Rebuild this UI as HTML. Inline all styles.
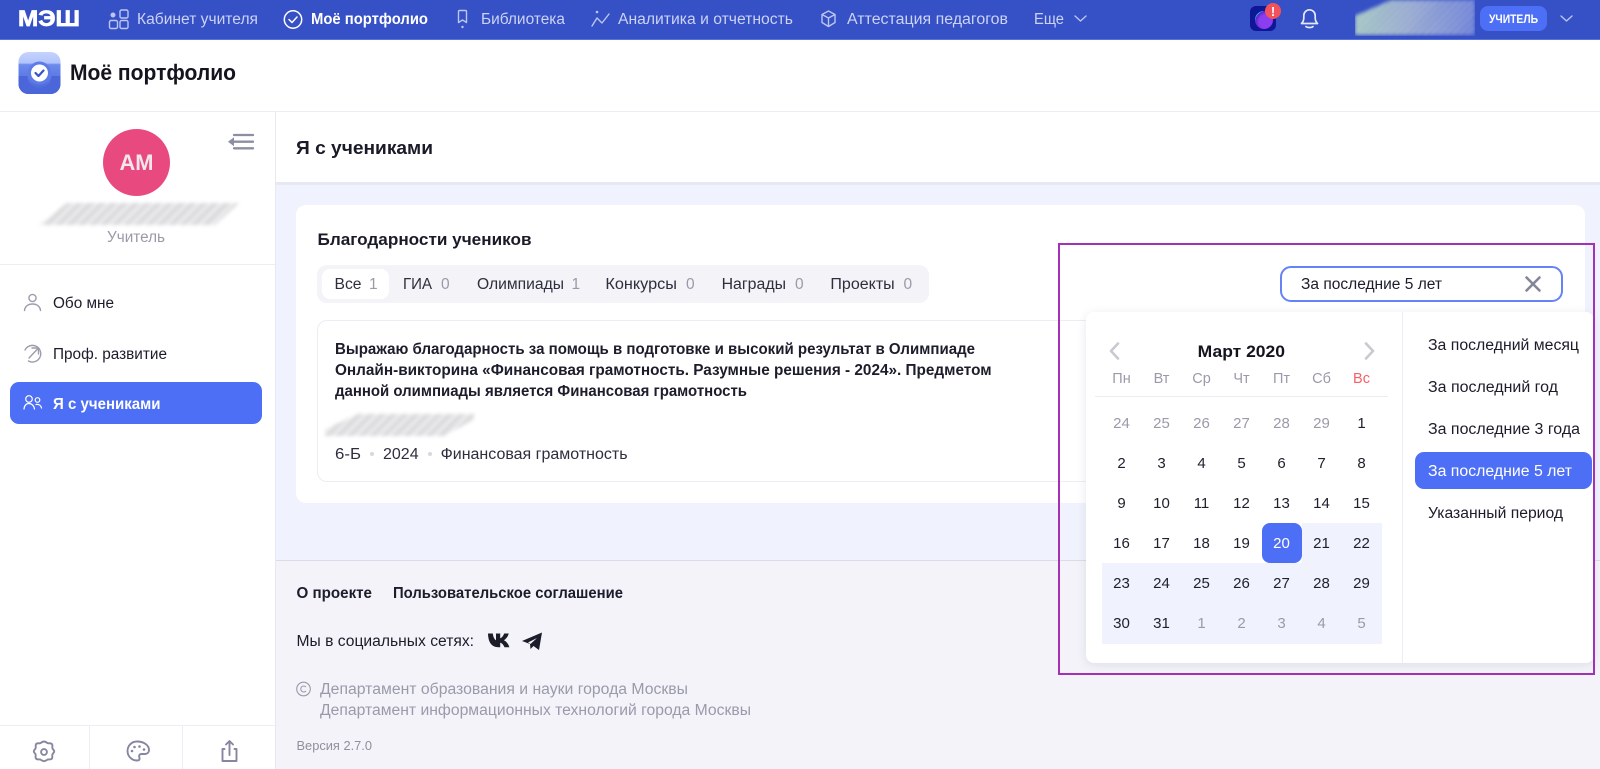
<!DOCTYPE html>
<html lang="ru"><head><meta charset="utf-8"><title>Моё портфолио</title>
<style>
html,body{margin:0;padding:0;width:1600px;height:769px;overflow:hidden;background:#fff;font-family:"Liberation Sans",sans-serif}
.b{position:absolute;box-sizing:border-box}
svg{position:absolute;left:0;top:0}
text{font-family:"Liberation Sans","Noto Sans CJK SC",sans-serif;font-size:15.5px;fill:#1c1c2b}
.nav{fill:#ccd3f4;font-size:15.5px}
.w{font-weight:700}
.g{fill:#9a9aaa}
.m{text-anchor:middle}
.d{text-anchor:middle;font-size:15px;fill:#20202e}
.o{text-anchor:middle;font-size:15px;fill:#9a9aaa}
.wd{text-anchor:middle;font-size:14.5px;fill:#9a9aaa}
.i{fill:none;stroke:#9c9cae;stroke-width:1.4;stroke-linecap:round;stroke-linejoin:round}
.n{fill:none;stroke:#bcc6f0;stroke-width:1.4;stroke-linecap:round;stroke-linejoin:round}
.blurw{filter:blur(1.8px)}
.blur{width:100%;height:100%;background:repeating-linear-gradient(-45deg,#d6d6d9 0 2px,#eeeef0 2px 5px,#dedee1 5px 8px)}
</style></head><body>
<div class="b" style="left:0;top:0;width:1600px;height:40px;background:#3650c6;border-bottom:1px solid #5a72dc"></div>
<div class="b" style="left:1355px;top:0;width:120px;height:36px;overflow:hidden"><div class="blurw" style="width:120px;height:35px"><div style="width:100%;height:100%;background:repeating-linear-gradient(-45deg,rgba(255,255,255,.3) 0 2px,rgba(255,255,255,0) 2px 5px),linear-gradient(90deg,#9cc0bf 0,#8ea2cc 45%,#6478d4 100%);clip-path:polygon(30% 0,100% 0,100% 100%,0 100%,0 45%)"></div></div></div>
<div class="b" style="left:1480px;top:6px;width:67px;height:25px;background:#4d6ff5;border-radius:8px"></div>
<div class="b" style="left:1250px;top:6px;width:26px;height:25px;background:#0e1796;border-radius:6px"></div>
<div class="b" style="left:1255px;top:11px;width:18px;height:18px;border-radius:50%;background:radial-gradient(circle at 62% 60%,#8b3df0 0 45%,#5a24c8 70%,#1fd0e6 72%,#1fd0e6 88%,#0e1796 90%)"></div>
<div class="b" style="left:1265px;top:3px;width:16px;height:16px;border-radius:50%;background:#f4525a"></div>

<div class="b" style="left:0;top:111px;width:1600px;height:1px;background:#ececf2"></div>
<div class="b" style="left:275px;top:112px;width:1px;height:657px;background:#e8e8f0"></div>
<div class="b" style="left:276px;top:184px;width:1324px;height:376px;background:#f0f3fd"></div>
<div class="b" style="left:276px;top:182px;width:1324px;height:3px;background:#e6e8f3"></div>
<div class="b" style="left:276px;top:560px;width:1324px;height:209px;background:#f3f3f9;border-top:1px solid #dcdce8"></div>

<div class="b" style="left:0;top:264px;width:275px;height:1px;background:#ededf3"></div>
<div class="b" style="left:103px;top:129px;width:67px;height:67px;border-radius:50%;background:#e84a80"></div>
<div class="b blurw" style="left:39px;top:203px;width:200px;height:22px"><div class="blur" style="clip-path:polygon(14% 0,100% 0,88% 100%,0 100%)"></div></div>
<div class="b" style="left:10px;top:382px;width:252px;height:42px;background:#4d6ff5;border-radius:9px"></div>
<div class="b" style="left:0;top:725px;width:275px;height:1px;background:#ededf3"></div>
<div class="b" style="left:89px;top:725px;width:1px;height:44px;background:#ededf3"></div>
<div class="b" style="left:182px;top:725px;width:1px;height:44px;background:#ededf3"></div>

<div class="b" style="left:296px;top:205px;width:1289px;height:298px;background:#fff;border-radius:10px"></div>
<div class="b" style="left:317px;top:265px;width:612px;height:38px;background:#f3f3f8;border-radius:10px"></div>
<div class="b" style="left:322px;top:269px;width:67px;height:30px;background:#fff;border-radius:8px"></div>
<div class="b" style="left:317px;top:320px;width:1247px;height:162px;background:#fff;border:1px solid #ececf2;border-radius:10px"></div>
<div class="b blurw" style="left:325px;top:414px;width:149px;height:22px"><div class="blur" style="clip-path:polygon(0 100%,0 70%,22% 0,100% 0,100% 25%,80% 100%)"></div></div>
<div class="b" style="left:370px;top:452px;width:4px;height:4px;border-radius:50%;background:#d8d8e0"></div>
<div class="b" style="left:428px;top:452px;width:4px;height:4px;border-radius:50%;background:#d8d8e0"></div>

<div class="b" style="left:1280px;top:266px;width:283px;height:36px;background:#fff;border:2px solid #6583f5;border-radius:11px"></div>
<div class="b" style="left:1086px;top:312px;width:508px;height:351px;background:#fff;border-radius:8px;box-shadow:0 2px 10px rgba(40,40,80,.10)"></div>
<div class="b" style="left:1402px;top:312px;width:1px;height:351px;background:#ececf2"></div>
<div class="b" style="left:1095px;top:396px;width:293px;height:1px;background:#ececf2"></div>
<div class="b" style="left:1302px;top:523px;width:80px;height:40px;background:#f0f3fd"></div>
<div class="b" style="left:1102px;top:563px;width:280px;height:81px;background:#f0f3fd"></div>
<div class="b" style="left:1262px;top:523px;width:40px;height:40px;background:#4d6ff5;border-radius:8px"></div>
<div class="b" style="left:1415px;top:452px;width:177px;height:37px;background:#4d6ff5;border-radius:9px"></div>

<svg width="1600" height="769" viewBox="0 0 1600 769" xmlns="http://www.w3.org/2000/svg">
<!-- top nav -->
<text x="18" y="26" textLength="62" lengthAdjust="spacingAndGlyphs" class="w" style="fill:#fff;font-size:22px;stroke:#fff;stroke-width:.7">МЭШ</text>
<g class="n"><circle cx="113" cy="15" r="1.800" fill="#bcc6f0"/><rect x="120" y="10" width="8" height="8" rx="1.5"/><rect x="109.500" y="20.500" width="8" height="8" rx="1.5"/><rect x="120" y="20.500" width="8" height="8" rx="1.500"/></g>
<text x="137" y="24" textLength="121" lengthAdjust="spacingAndGlyphs" class="nav">Кабинет учителя</text>
<g fill="none" stroke="#fff" stroke-width="1.500" stroke-linecap="round" stroke-linejoin="round"><circle cx="293" cy="19.500" r="8.700"/><path d="M289 19.500l3 3 5-5.500"/></g>
<text x="311" y="24" textLength="117" lengthAdjust="spacingAndGlyphs" class="w" style="fill:#fff">Моё портфолио</text>
<path class="n" d="M459.500 10.500h6a1 1 0 0 1 1 1v11l-4-2.500-4 2.500v-11a1 1 0 0 1 1-1z"/><circle cx="462.500" cy="27" r="1.200" fill="#bcc6f0"/>
<text x="481" y="24" textLength="84" lengthAdjust="spacingAndGlyphs" class="nav">Библиотека</text>
<path class="n" d="M592 26l5-8 5 5 7-9"/><circle cx="597" cy="12" r="1.300" fill="#bcc6f0"/>
<text x="618" y="24" textLength="175" lengthAdjust="spacingAndGlyphs" class="nav">Аналитика и отчетность</text>
<path class="n" d="M828.500 11l6.500 3.500v8l-6.500 4-6.500-4v-8zM822 14.500l6.500 3.500 6.500-3.500M828.500 18v8.500"/>
<text x="847" y="24" textLength="161" lengthAdjust="spacingAndGlyphs" class="nav">Аттестация педагогов</text>
<text x="1034" y="24" textLength="30" lengthAdjust="spacingAndGlyphs" class="nav">Еще</text>
<path class="n" d="M1075 16l5.500 5 5.500-5"/>
<text x="1273" y="16" class="m w" style="fill:#fff;font-size:13px">!</text>
<path fill="none" stroke="#e4e8fa" stroke-width="1.700" stroke-linecap="round" stroke-linejoin="round" d="M1301.500 23.500c1.500-1.500 2.300-3 2.300-5.500v-2.500a5.700 5.700 0 0 1 11.400 0v2.500c0 2.500.8 4 2.300 5.500zM1306 26.500c1 1.300 6 1.300 7 0"/>
<text x="1489" y="23" textLength="49" lengthAdjust="spacingAndGlyphs" class="w" style="fill:#fff;font-size:11.500px">УЧИТЕЛЬ</text>
<path class="n" d="M1561 16l5.500 5 5.500-5"/>

<!-- app header -->
<defs><linearGradient id="ap" x1="0" y1="0" x2="0" y2="1"><stop offset="0" stop-color="#c4d2fd"/><stop offset=".26" stop-color="#b2c4fb"/><stop offset=".3" stop-color="#6d8aec"/><stop offset="1" stop-color="#4763d8"/></linearGradient></defs>
<rect x="18.500" y="52" width="42" height="42" rx="10" fill="url(#ap)"/>
<path d="M18.500 76h9a12 12 0 0 0 24 0h9v8a10 10 0 0 1-10 10h-22a10 10 0 0 1-10-10z" fill="#4a66d8"/>
<circle cx="39.500" cy="73" r="11.500" fill="#5f7ce6"/><circle cx="39.500" cy="73" r="8.500" fill="#fff"/>
<path d="M35.500 73l3 3 5-5.500" fill="none" stroke="#3a52c8" stroke-width="2.200" stroke-linecap="round" stroke-linejoin="round"/>
<text x="70" y="80" textLength="166" lengthAdjust="spacingAndGlyphs" class="w" style="font-size:22px;fill:#14141f">Моё портфолио</text>

<!-- sidebar -->
<path fill="none" stroke="#8d8da3" stroke-width="2.300" stroke-linecap="round" stroke-linejoin="round" d="M234 135h19M230 141.700h23M234 148.300h19"/>
<path d="M228 141.700l6-4.500v9z" fill="#8d8da3"/>
<text x="119.500" y="170" textLength="34" lengthAdjust="spacingAndGlyphs" class="w" style="font-size:22px;fill:#f3e6ec">АМ</text>
<text x="107" y="242" textLength="58" lengthAdjust="spacingAndGlyphs" class="g">Учитель</text>
<g class="i"><circle cx="32.500" cy="298" r="3.600"/><path d="M24.500 310.500c.5-4.500 4-6.500 8-6.500s7.500 2 8 6.500"/></g>
<text x="53" y="308" textLength="61" lengthAdjust="spacingAndGlyphs">Обо мне</text>
<g class="i"><path d="M25 350a8.300 8.300 0 1 1 3.500 11"/><path d="M29 358l9-9.500M32 348h6.500v6"/></g>
<text x="53" y="359" textLength="114" lengthAdjust="spacingAndGlyphs">Проф. развитие</text>
<g fill="none" stroke="#fff" stroke-width="1.200" stroke-linecap="round"><circle cx="29" cy="399" r="3.300"/><circle cx="37.500" cy="400" r="2.300"/><path d="M24 409c.5-4 2.500-5.500 5-5.500s5 2 5.500 5.500M36 404.500c3-.5 5 1 5.500 3.500"/></g>
<text x="53" y="409" textLength="107.500" lengthAdjust="spacingAndGlyphs" class="w" style="fill:#fff">Я с учениками</text>
<g fill="none" stroke="#8686a0" stroke-width="1.900" stroke-linejoin="round" stroke-linecap="round">
<path d="M44 741.500c1.800 0 2.700 1.300 4 1.800 1.300 0 3-.4 4 .9s0 2.700.4 4 1.800 1.800 1.800 3.200-1.300 1.800-1.800 3.100.4 2.700-.4 4-2.700.9-4 .9c-1.300.5-2.200 1.800-4 1.800s-2.700-1.300-4-1.800c-1.300 0-3 .4-4-.9s0-2.700-.4-4-1.800-1.700-1.800-3.100 1.300-1.900 1.800-3.200-.4-2.700.4-4 2.700-.9 4-.9c1.300-.5 2.200-1.800 4-1.800z"/><circle cx="44" cy="752" r="2.900"/>
<path d="M137 741.500c-5.500 0-9.500 4.300-9.500 9.500 0 5.500 4.500 9.500 9.500 9.500 2.800 0 2.800-1.800 2.300-3.200s0-3.300 2.300-3.300h3c2.800 0 4.400-1.800 4.400-4 0-4.700-5-8.500-12-8.500z"/>
<path d="M224.500 749h-2v12h14v-12h-2M229.500 755v-13.500M226 744.500l3.500-3.500 3.500 3.500"/></g>
<g fill="#8686a0"><circle cx="132" cy="751" r="1.300"/><circle cx="134.500" cy="747" r="1.300"/><circle cx="139.500" cy="746.500" r="1.300"/><circle cx="144" cy="749.500" r="1.300"/></g>

<!-- main -->
<text x="296" y="154" textLength="137" lengthAdjust="spacingAndGlyphs" class="w" style="font-size:18.500px;fill:#1a1a28">Я с учениками</text>
<text x="317.500" y="245" textLength="214" lengthAdjust="spacingAndGlyphs" class="w" style="font-size:16.500px;fill:#1a1a28">Благодарности учеников</text>
<g>
<text x="334.500" y="289" textLength="27" lengthAdjust="spacingAndGlyphs" style="fill:#2e2e3e">Все</text>
<text x="403" y="289" textLength="29" lengthAdjust="spacingAndGlyphs" style="fill:#2e2e3e">ГИА</text>
<text x="477" y="289" textLength="87" lengthAdjust="spacingAndGlyphs" style="fill:#2e2e3e">Олимпиады</text>
<text x="605.400" y="289" textLength="71.600" lengthAdjust="spacingAndGlyphs" style="fill:#2e2e3e">Конкурсы</text>
<text x="721.600" y="289" textLength="64.400" lengthAdjust="spacingAndGlyphs" style="fill:#2e2e3e">Награды</text>
<text x="830.400" y="289" textLength="64.300" lengthAdjust="spacingAndGlyphs" style="fill:#2e2e3e">Проекты</text>
</g>
<g>
<text x="369" y="289" class="g">1</text><text x="441" y="289" class="g">0</text><text x="571.500" y="289" class="g">1</text><text x="686" y="289" class="g">0</text><text x="795" y="289" class="g">0</text><text x="903.500" y="289" class="g">0</text>
</g>
<text x="335" y="354" textLength="640" lengthAdjust="spacingAndGlyphs" class="w">Выражаю благодарность за помощь в подготовке и высокий результат в Олимпиаде</text>
<text x="335" y="375" textLength="656.600" lengthAdjust="spacingAndGlyphs" class="w">Онлайн-викторина «Финансовая грамотность. Разумные решения - 2024». Предметом</text>
<text x="335" y="396" textLength="412" lengthAdjust="spacingAndGlyphs" class="w">данной олимпиады является Финансовая грамотность</text>
<text x="335" y="459" textLength="26" lengthAdjust="spacingAndGlyphs" style="fill:#2e2e3e">6-Б</text>
<text x="383" y="459" textLength="35.600" lengthAdjust="spacingAndGlyphs" style="fill:#2e2e3e">2024</text>
<text x="440.600" y="459" textLength="187" lengthAdjust="spacingAndGlyphs" style="fill:#2e2e3e">Финансовая грамотность</text>

<!-- footer -->
<text x="296.500" y="598" textLength="75.500" lengthAdjust="spacingAndGlyphs" class="w">О проекте</text>
<text x="393" y="598" textLength="230" lengthAdjust="spacingAndGlyphs" class="w">Пользовательское соглашение</text>
<text x="296.500" y="646" textLength="177.500" lengthAdjust="spacingAndGlyphs">Мы в социальных сетях:</text>
<path fill="#1c1c2b" d="M488 633.500h4.800c.3 3 1.500 5.800 3.200 6.800v-6.800h4.200v4.800c1.600-.5 3.200-2.500 4-4.800h4.500c-.7 3.200-2.900 5.500-4.800 6.800 2.100 1 4.300 3.200 5.500 6.900h-4.900c-.9-2.400-2.600-4.200-4.300-4.500v4.500h-1.600c-7.300 0-10.400-5.300-10.600-13.700z"/>
<path fill="#1c1c2b" d="M542 632.500l-3 17.500-5.500-4-3 3-.5-5-8-3zM530.500 644l6.500-6-9 4.500z"/>
<circle cx="303.500" cy="689" r="6.800" fill="none" stroke="#9a9aaa" stroke-width="1.100"/>
<path d="M306 687a3 3 0 1 0 0 4" fill="none" stroke="#9a9aaa" stroke-width="1.100"/>
<text x="320" y="694" textLength="368" lengthAdjust="spacingAndGlyphs" class="g">Департамент образования и науки города Москвы</text>
<text x="320" y="715" textLength="431" lengthAdjust="spacingAndGlyphs" class="g">Департамент информационных технологий города Москвы</text>
<text x="296.500" y="750" textLength="75.500" lengthAdjust="spacingAndGlyphs" style="font-size:13px;fill:#8f8f9e">Версия 2.7.0</text>

<!-- date picker -->
<text x="1301" y="289" textLength="141" lengthAdjust="spacingAndGlyphs">За последние 5 лет</text>
<path d="M1526.500 277.500l13 13M1539.500 277.500l-13 13" stroke="#85859a" stroke-width="2.600" stroke-linecap="round"/>
<path d="M1118 343.500l-7 7.500 7 7.500M1366 343.500l7 7.500-7 7.500" fill="none" stroke="#c9c9d2" stroke-width="2.600" stroke-linecap="round" stroke-linejoin="round"/>
<text x="1197.700" y="357" textLength="87.300" lengthAdjust="spacingAndGlyphs" class="w" style="font-size:16.500px;fill:#14141f">Март 2020</text>
<text x="1121.500" y="383" class="wd">Пн</text><text x="1161.500" y="383" class="wd">Вт</text><text x="1201.500" y="383" class="wd">Ср</text><text x="1241.500" y="383" class="wd">Чт</text><text x="1281.500" y="383" class="wd">Пт</text><text x="1321.500" y="383" class="wd">Сб</text><text x="1361.500" y="383" class="wd" style="fill:#f5606a">Вс</text>
<text x="1121.500" y="428" class="o">24</text><text x="1161.500" y="428" class="o">25</text><text x="1201.500" y="428" class="o">26</text><text x="1241.500" y="428" class="o">27</text><text x="1281.500" y="428" class="o">28</text><text x="1321.500" y="428" class="o">29</text><text x="1361.500" y="428" class="d">1</text>
<text x="1121.500" y="468" class="d">2</text><text x="1161.500" y="468" class="d">3</text><text x="1201.500" y="468" class="d">4</text><text x="1241.500" y="468" class="d">5</text><text x="1281.500" y="468" class="d">6</text><text x="1321.500" y="468" class="d">7</text><text x="1361.500" y="468" class="d">8</text>
<text x="1121.500" y="508" class="d">9</text><text x="1161.500" y="508" class="d">10</text><text x="1201.500" y="508" class="d">11</text><text x="1241.500" y="508" class="d">12</text><text x="1281.500" y="508" class="d">13</text><text x="1321.500" y="508" class="d">14</text><text x="1361.500" y="508" class="d">15</text>
<text x="1121.500" y="548" class="d">16</text><text x="1161.500" y="548" class="d">17</text><text x="1201.500" y="548" class="d">18</text><text x="1241.500" y="548" class="d">19</text><text x="1281.500" y="548" class="d" style="fill:#fff">20</text><text x="1321.500" y="548" class="d">21</text><text x="1361.500" y="548" class="d">22</text>
<text x="1121.500" y="588" class="d">23</text><text x="1161.500" y="588" class="d">24</text><text x="1201.500" y="588" class="d">25</text><text x="1241.500" y="588" class="d">26</text><text x="1281.500" y="588" class="d">27</text><text x="1321.500" y="588" class="d">28</text><text x="1361.500" y="588" class="d">29</text>
<text x="1121.500" y="628" class="d">30</text><text x="1161.500" y="628" class="d">31</text><text x="1201.500" y="628" class="o">1</text><text x="1241.500" y="628" class="o">2</text><text x="1281.500" y="628" class="o">3</text><text x="1321.500" y="628" class="o">4</text><text x="1361.500" y="628" class="o">5</text>
<text x="1428" y="350" textLength="151" lengthAdjust="spacingAndGlyphs">За последний месяц</text>
<text x="1428" y="392" textLength="130" lengthAdjust="spacingAndGlyphs">За последний год</text>
<text x="1428" y="434" textLength="152" lengthAdjust="spacingAndGlyphs">За последние 3 года</text>
<text x="1428" y="476" textLength="144" lengthAdjust="spacingAndGlyphs" style="fill:#fff">За последние 5 лет</text>
<text x="1428" y="518" textLength="135" lengthAdjust="spacingAndGlyphs">Указанный период</text>
</svg>
<div class="b" style="left:1058px;top:243px;width:537px;height:432px;border:2px solid #a331b8"></div>
</body></html>
